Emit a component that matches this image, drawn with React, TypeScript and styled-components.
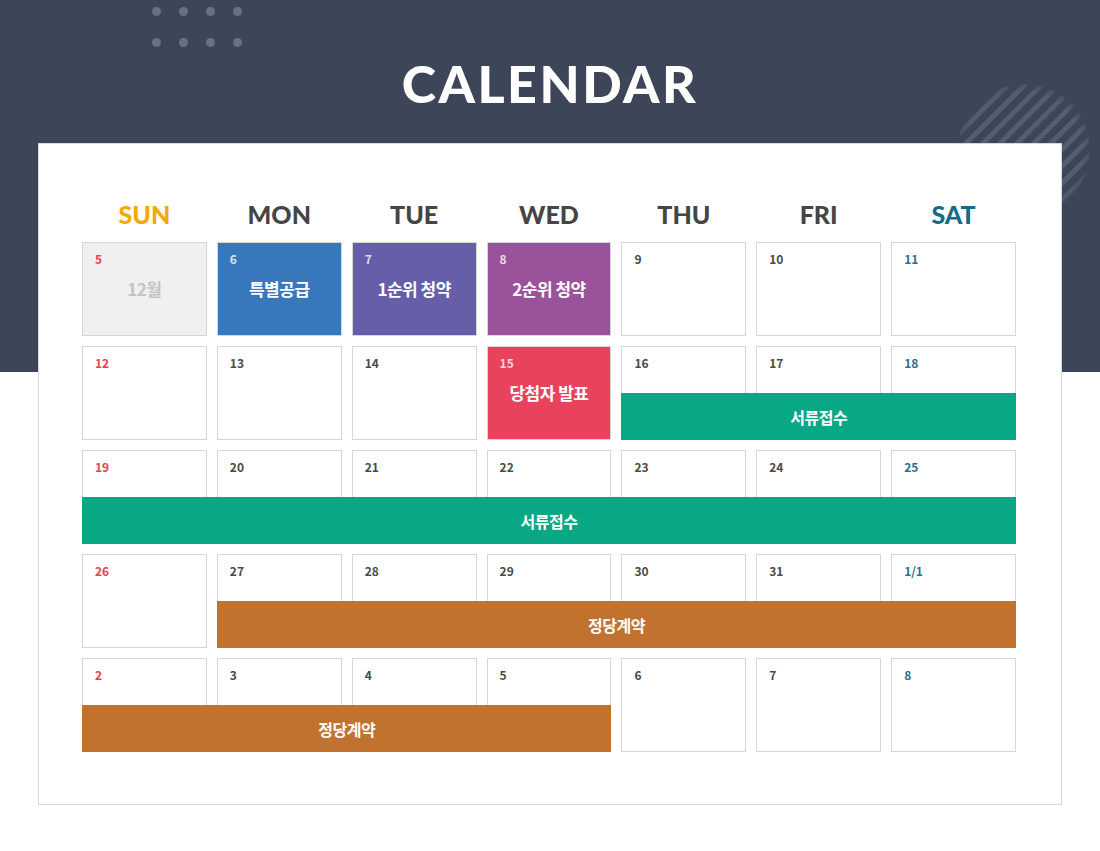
import React from 'react';
import styled, { createGlobalStyle } from 'styled-components';

const GlobalStyle = createGlobalStyle`
  * { box-sizing: border-box; }
  body {
    margin: 0;
    font-family: "Noto Sans CJK KR", "Noto Sans", sans-serif;
    background: #fff;
  }
`;

const Page = styled.div`
  position: relative;
  width: 1100px;
  height: 851px;
  overflow: hidden;
  background: linear-gradient(#3d4558 0 372px, #fff 372px);
  padding-top: 143px;
  padding-left: 38px;
`;

const Dots = styled.div`
  position: absolute;
  left: 152px;
  top: 7px;
  display: grid;
  grid-template-columns: repeat(4, 10px);
  column-gap: 17px;
  row-gap: 22px;
`;

const Dot = styled.span`
  width: 9px;
  height: 9px;
  border-radius: 50%;
  background: #687084;
`;

const Title = styled.h1`
  position: absolute;
  left: 0;
  right: 0;
  top: 52px;
  margin: 0;
  text-align: center;
  color: #fff;
  font-family: Lato, "Noto Sans", sans-serif;
  font-weight: 900;
  font-size: 52px;
  line-height: 62px;
  letter-spacing: 2.5px;
`;

const Stripes = styled.svg`
  position: absolute;
  left: 956px;
  top: 82px;
`;

const Card = styled.div`
  position: relative;
  width: 1024px;
  height: 662px;
  background: #fff;
  border: 1px solid #d8d8d8;
  padding: 56px 45px 0 43px;
`;

const WeekRow = styled.div`
  display: grid;
  grid-template-columns: repeat(7, 1fr);
  column-gap: 10px;
  height: 28px;
  margin-bottom: 14px;
`;

const DayName = styled.div<{ $color: string }>`
  text-align: center;
  font-family: Lato, "Noto Sans", sans-serif;
  font-weight: 900;
  font-size: 25px;
  line-height: 28px;
  color: ${(p) => p.$color};
`;

const Grid = styled.div`
  display: grid;
  grid-template-columns: repeat(7, 1fr);
  grid-template-rows: repeat(5, 94px);
  column-gap: 10px;
  row-gap: 10px;
`;

const Cell = styled.div<{ $row: number; $col: number; $bg?: string }>`
  grid-row: ${(p) => p.$row};
  grid-column: ${(p) => p.$col};
  display: flex;
  flex-direction: column;
  align-items: center;
  border: 1px solid #d6d6d6;
  background: ${(p) => p.$bg || '#fff'};
  padding: 8px 12px 0;
`;

const Num = styled.span<{ $color: string }>`
  align-self: flex-start;
  font-size: 12px;
  font-weight: 700;
  line-height: 16px;
  color: ${(p) => p.$color};
`;

const Event = styled.span<{ $color?: string }>`
  margin-top: 10px;
  font-size: 17px;
  font-weight: 700;
  line-height: 24px;
  color: ${(p) => p.$color || '#fff'};
  letter-spacing: -0.5px;
`;

const Bar = styled.div<{ $row: number; $from: number; $to: number; $bg: string }>`
  grid-row: ${(p) => p.$row};
  grid-column: ${(p) => p.$from} / ${(p) => p.$to + 1};
  align-self: end;
  height: 47px;
  display: flex;
  align-items: center;
  justify-content: center;
  background: ${(p) => p.$bg};
  color: #fff;
  font-size: 16px;
  font-weight: 700;
  letter-spacing: -0.5px;
`;

const days = [
  { name: 'SUN', color: '#f2a900' },
  { name: 'MON', color: '#454545' },
  { name: 'TUE', color: '#454545' },
  { name: 'WED', color: '#454545' },
  { name: 'THU', color: '#454545' },
  { name: 'FRI', color: '#454545' },
  { name: 'SAT', color: '#15698c' },
];

const weeks = [
  ['5', '6', '7', '8', '9', '10', '11'],
  ['12', '13', '14', '15', '16', '17', '18'],
  ['19', '20', '21', '22', '23', '24', '25'],
  ['26', '27', '28', '29', '30', '31', '1/1'],
  ['2', '3', '4', '5', '6', '7', '8'],
];

type Special = { bg: string; text: string; textColor?: string; numColor?: string };

const specials: Record<string, Special> = {
  '0-0': { bg: '#f0f0f0', text: '12월', textColor: '#c4c4c4', numColor: '#e8414f' },
  '0-1': { bg: '#3778bd', text: '특별공급' },
  '0-2': { bg: '#665ea9', text: '1순위 청약' },
  '0-3': { bg: '#9a539a', text: '2순위 청약' },
  '1-3': { bg: '#e8425d', text: '당첨자 발표' },
};

const bars = [
  { row: 2, from: 5, to: 7, bg: '#08a884', text: '서류접수' },
  { row: 3, from: 1, to: 7, bg: '#08a884', text: '서류접수' },
  { row: 4, from: 2, to: 7, bg: '#c1722f', text: '정당계약' },
  { row: 5, from: 1, to: 4, bg: '#c1722f', text: '정당계약' },
];

const numColor = (col: number) => (col === 0 ? '#e8414f' : col === 6 ? '#2e6e90' : '#4a4a4a');

export default function App() {
  return (
    <>
      <GlobalStyle />
      <Page>
        <Dots>
          {Array.from({ length: 8 }).map((_, i) => (
            <Dot key={i} />
          ))}
        </Dots>
        <Title>CALENDAR</Title>
        <Stripes width="136" height="136" viewBox="0 0 136 136">
          <defs>
            <pattern id="stripe" width="12" height="12" patternUnits="userSpaceOnUse" patternTransform="rotate(45)">
              <rect x="0" y="0" width="5" height="12" fill="#555e71" />
            </pattern>
            <radialGradient id="fade" cx="50%" cy="50%" r="50%">
              <stop offset="88%" stopColor="#fff" stopOpacity="1" />
              <stop offset="100%" stopColor="#fff" stopOpacity="0.5" />
            </radialGradient>
            <mask id="circleMask">
              <circle cx="68" cy="68" r="66" fill="url(#fade)" />
            </mask>
          </defs>
          <rect width="136" height="136" fill="url(#stripe)" mask="url(#circleMask)" />
        </Stripes>
        <Card>
          <WeekRow>
            {days.map((d) => (
              <DayName key={d.name} $color={d.color}>
                {d.name}
              </DayName>
            ))}
          </WeekRow>
          <Grid>
            {weeks.map((week, r) =>
              week.map((n, c) => {
                const s = specials[`${r}-${c}`];
                return (
                  <Cell key={`${r}-${c}`} $row={r + 1} $col={c + 1} $bg={s?.bg}>
                    <Num $color={s ? s.numColor || 'rgba(255,255,255,0.8)' : numColor(c)}>{n}</Num>
                    {s && <Event $color={s.textColor}>{s.text}</Event>}
                  </Cell>
                );
              })
            )}
            {bars.map((b, i) => (
              <Bar key={i} $row={b.row} $from={b.from} $to={b.to} $bg={b.bg}>
                {b.text}
              </Bar>
            ))}
          </Grid>
        </Card>
      </Page>
    </>
  );
}
